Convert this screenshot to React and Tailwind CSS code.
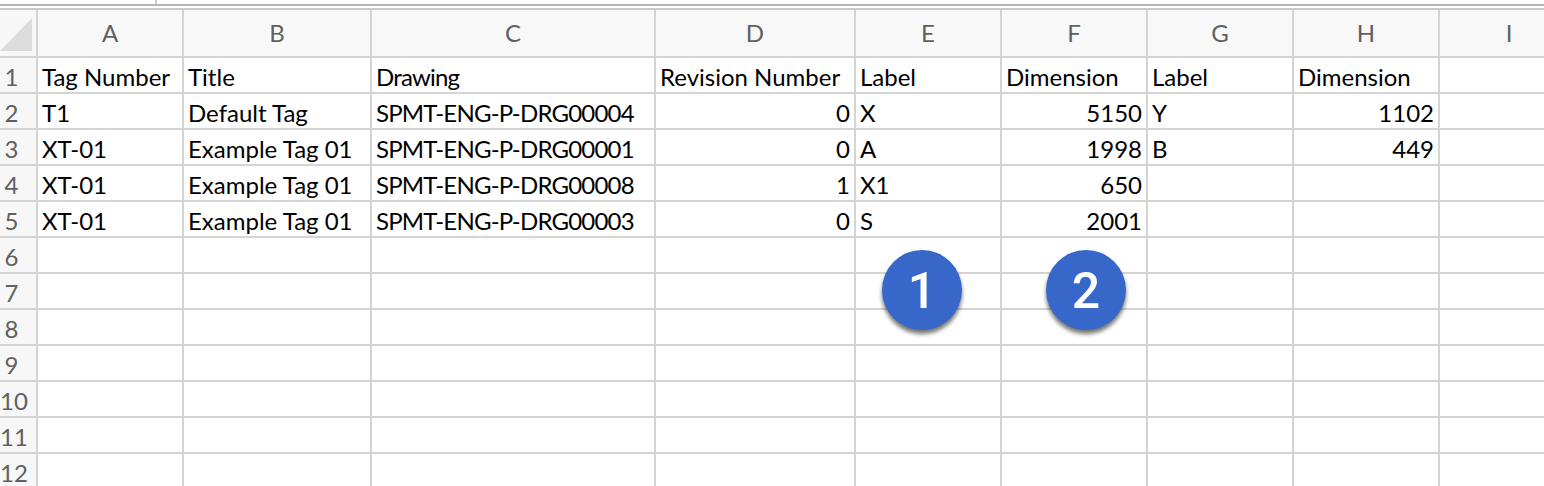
const columns = ['A', 'B', 'C', 'D', 'E', 'F', 'G', 'H', 'I']

const rows = [
  ['Tag Number', 'Title', 'Drawing', 'Revision Number', 'Label', 'Dimension', 'Label', 'Dimension', ''],
  ['T1', 'Default Tag', 'SPMT-ENG-P-DRG00004', 0, 'X', 5150, 'Y', 1102, ''],
  ['XT-01', 'Example Tag 01', 'SPMT-ENG-P-DRG00001', 0, 'A', 1998, 'B', 449, ''],
  ['XT-01', 'Example Tag 01', 'SPMT-ENG-P-DRG00008', 1, 'X1', 650, '', '', ''],
  ['XT-01', 'Example Tag 01', 'SPMT-ENG-P-DRG00003', 0, 'S', 2001, '', '', ''],
  ['', '', '', '', '', '', '', '', ''],
  ['', '', '', '', '', '', '', '', ''],
  ['', '', '', '', '', '', '', '', ''],
  ['', '', '', '', '', '', '', '', ''],
  ['', '', '', '', '', '', '', '', ''],
  ['', '', '', '', '', '', '', '', ''],
  ['', '', '', '', '', '', '', '', ''],
]

function Badge({ children, className }) {
  return (
    <div
      className={`absolute top-[250px] flex h-[80px] w-[80px] items-center justify-center rounded-full bg-[#3667c9] pt-[2px] text-[50px] font-medium text-white shadow-[0_4px_4px_rgba(0,0,0,0.55)] [font-family:'Roboto',sans-serif] ${className}`}
    >
      {children}
    </div>
  )
}

function App() {
  return (
    <div className="relative h-[486px] w-[1544px] overflow-hidden bg-white text-[24px] leading-none text-black [font-family:'Lato',sans-serif]">
      <div className="h-[10px] border-b-2 border-[#c9c9c9]">
        <div className="h-[6px] border-b-2 border-[#b5b5b5]" />
      </div>
      <div className="absolute top-0 left-[155px] h-[4px] w-[2px] bg-[#c9c9c9]" />

      <div className="grid grid-cols-[38px_146px_188px_284px_200px_146px_146px_146px_146px_140px] grid-rows-[48px_repeat(12,36px)]">
        <div className="flex items-end border-r-2 border-b-2 border-[#d4d4d4] bg-[#f7f7f7] pb-[5px]">
          <svg width="32" height="33" viewBox="0 0 32 33">
            <path d="M0 33 L32 0 L32 33 Z" fill="#dcdcdc" />
          </svg>
        </div>
        {columns.map((col) => (
          <div
            key={col}
            className="flex items-center justify-center border-r-2 border-b-2 border-[#d4d4d4] bg-[#f8f8f8] text-[#606060]"
          >
            {col}
          </div>
        ))}

        {rows.map((row, i) => (
          <div key={i} className="contents">
            <div className="flex items-end border-r-2 border-b-2 border-[#d4d4d4] bg-[#f7f7f7] pb-[3px] text-[#606060]">
              <span className="w-[23px] text-center">{i + 1}</span>
            </div>
            {row.map((value, j) => (
              <div
                key={j}
                className={`flex items-end border-r-2 border-b-2 border-[#d4d4d4] px-[4px] pb-[3px] whitespace-nowrap ${typeof value === 'number' ? 'justify-end' : ''} ${j === 2 ? 'tracking-[-0.8px]' : ''}`}
              >
                {value}
              </div>
            ))}
          </div>
        ))}
      </div>

      <Badge className="left-[882px]">1</Badge>
      <Badge className="left-[1046px]">2</Badge>
    </div>
  )
}

export default App
